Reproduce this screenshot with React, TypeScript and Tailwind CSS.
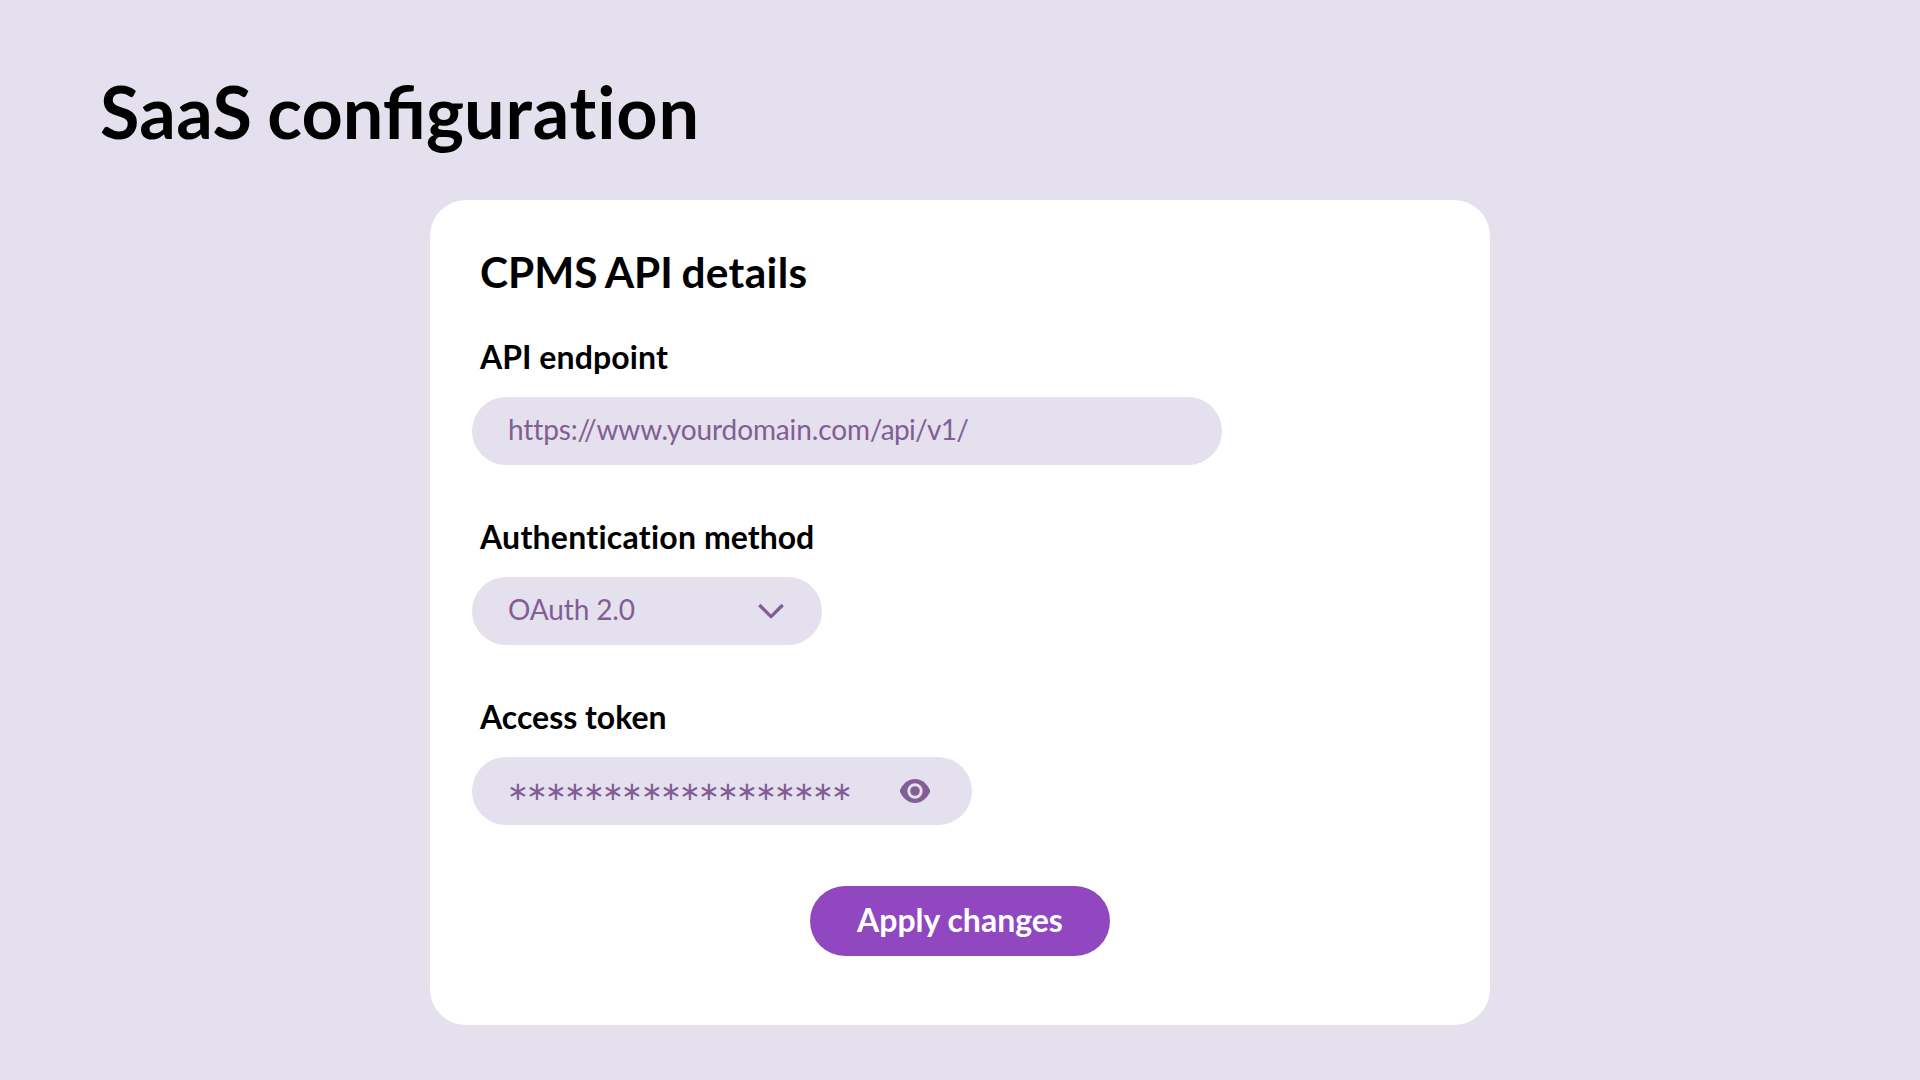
import React from "react";

function Label({ children }: { children: React.ReactNode }) {
  return (
    <label className="ml-2 block h-10 text-[32px] leading-10 font-bold [font-variant-ligatures:none]">
      {children}
    </label>
  );
}

const pill =
  "mt-5 flex h-[68px] items-center justify-between rounded-full bg-[#e4e0ed] pl-9 text-[28px] text-[#815e95] [font-variant-ligatures:none]";

export default function App() {
  return (
    <main className="h-[1080px] w-[1920px] overflow-hidden bg-[#e4e0ed] pt-[66px] font-['Lato',sans-serif] text-black">
      <h1 className="ml-[100px] h-[90px] text-[72px] leading-[90px] font-bold">
        <span className="tracking-[0.3px]">SaaS</span>
        <span className="[word-spacing:-2.4px]"> config</span>
        <span className="tracking-[0.85px]">uration</span>
      </h1>
      <section className="mx-auto mt-[44px] flex h-[825px] w-[1060px] flex-col rounded-[36px] bg-white pt-[45px] pl-[42px]">
        <h2 className="ml-2 h-[54px] text-[42.4px] leading-[54px] font-bold [word-spacing:-1.8px]">
          CPMS API <span className="tracking-[0.35px]">details</span>
        </h2>
        <div className="mt-[38px]">
          <Label>API <span className="tracking-[0.12px]">endpoint</span></Label>
          <div className={`${pill} w-[750px]`}>
            <span className="pb-[4px] tracking-[-0.12px]">
              https://www.yourdomain.com<span className="tracking-[-0.7px]">/api/v1/</span>
            </span>
          </div>
        </div>
        <div className="mt-[52px]">
          <Label><span className="tracking-[0.25px]">Authentication</span> method</Label>
          <div className={`${pill} w-[350px] pr-[37px]`}>
            <span className="pb-[4px] tracking-[-0.12px]">OAuth 2.0</span>
            <svg className="mb-px shrink-0" width="28" height="18" viewBox="0 0 28 18" fill="none" stroke="currentColor" strokeWidth="3.3" strokeLinejoin="round">
              <path d="M2.3 3 L14 14.6 L25.7 3" />
            </svg>
          </div>
        </div>
        <div className="mt-[52px]">
          <Label>Access token</Label>
          <div className={`${pill} w-[500px] pr-[42px]`}>
            <span className="-ml-px pb-[2px] text-[26px] tracking-[-2.92px]">∗∗∗∗∗∗∗∗∗∗∗∗∗∗∗∗∗∗</span>
            <svg className="shrink-0" width="30" height="24" viewBox="0 0 30 24" fill="currentColor">
              <path fillRule="evenodd" d="M15 0C8.500 0 3.300 4.200.3 10.400a3.600 3.600 0 0 0 0 3.200C3.300 19.800 8.500 24 15 24s11.700-4.200 14.700-10.400a3.600 3.600 0 0 0 0-3.200C26.700 4.200 21.500 0 15 0zM15 19.700a7.700 7.700 0 1 1 0-15.400 7.700 7.700 0 0 1 0 15.400zM15 7.200a4.800 4.800 0 1 0 0 9.600 4.800 4.800 0 0 0 0-9.600z" />
            </svg>
          </div>
        </div>
        <button className="mt-[61px] ml-[338px] h-[70px] w-[300px] rounded-full bg-[#9047bf] pb-[3px] text-[32px] font-bold text-white">
          Apply changes
        </button>
      </section>
    </main>
  );
}
